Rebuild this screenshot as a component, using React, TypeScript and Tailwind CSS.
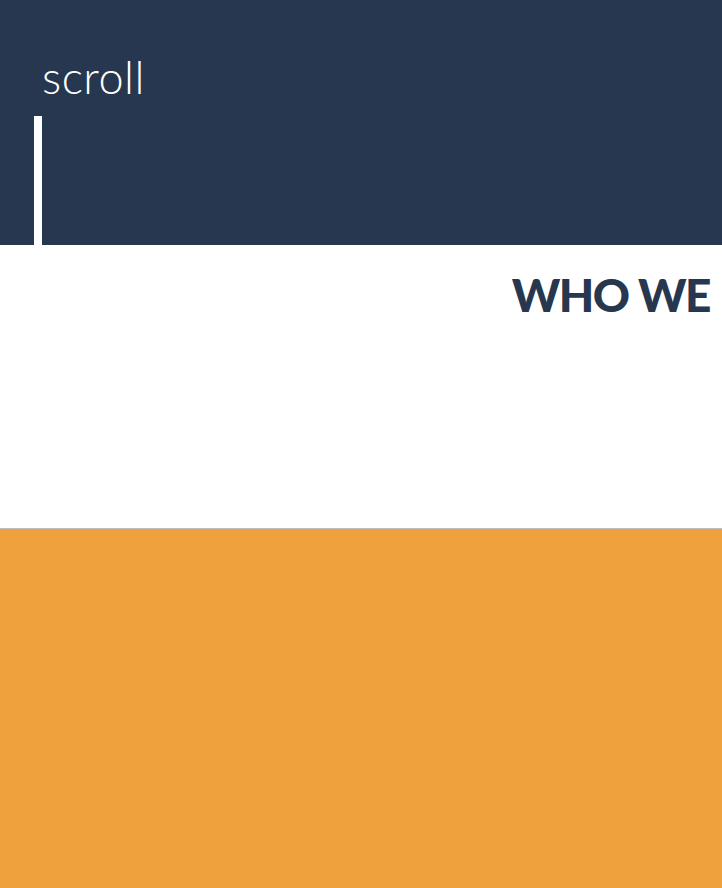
import React from 'react';

const App = () => {
  return (
    <div className="w-full h-[888px] flex flex-col overflow-hidden font-['Lato',sans-serif]">
      <section className="h-[245px] bg-[#26374f] flex flex-col">
        <div className="pl-[42px] pt-[52px] text-white text-[45px] font-light leading-[50px] tracking-[0.5px]">
          scroll
        </div>
        <div className="ml-[34px] mt-auto w-2 h-[129px] bg-white" />
      </section>
      <section className="h-[284px] bg-white border-b border-[#bdbdbd] flex justify-end pr-[12px]">
        <h2 className="pt-[27px] whitespace-nowrap text-[#26374f] text-[46px] font-black leading-[46px] tracking-[-1.5px]">
          WHO WE
        </h2>
      </section>
      <section className="flex-1 bg-[#eea13c]" />
    </div>
  );
};

export default App;
